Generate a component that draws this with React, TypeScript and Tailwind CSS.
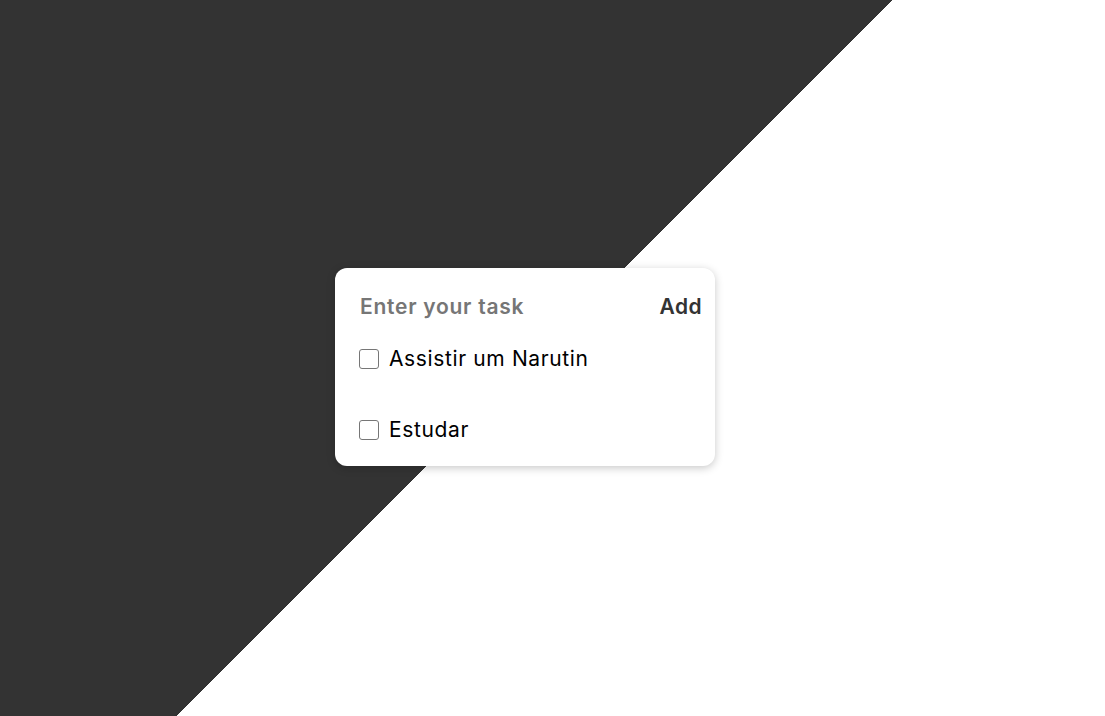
import { useState } from "react";

const TASKS = ["Assistir um Narutin", "Estudar"];

export default function App() {
  const [value, setValue] = useState("");

  return (
    <div className="flex min-h-screen items-center justify-center bg-[linear-gradient(135deg,#333333_49%,#ffffff_49%)] font-['Inter',sans-serif]">
      <div className="mr-[55px] mt-[18px] w-[380px] rounded-[12px] bg-white pb-[16px] pt-[19px] shadow-[0_2px_8px_rgba(0,0,0,0.22)]">
        {/* header */}
        <div className="flex h-[40px] items-center pl-[25px] pr-[13px]">
          <input
            value={value}
            onChange={(e) => setValue(e.target.value)}
            placeholder="Enter your task"
            className="min-w-0 flex-1 bg-transparent text-[21px] font-semibold tracking-[0.035em] text-[#333] outline-none placeholder:text-[#767676]"
          />
          <button className="text-[21px] font-semibold tracking-[0.02em] text-[#333]">Add</button>
        </div>

        <ul className="mt-[12px] flex flex-col gap-[31px] px-[24px]">
          {TASKS.map((t) => (
            <li key={t} className="flex h-[40px] items-center gap-[10px]">
              <input
                type="checkbox"
                className="h-[20px] w-[20px] appearance-none rounded-[3px] border border-[#767676] bg-white"
              />
              <span className="text-[21px] tracking-[0.03em] text-black">{t}</span>
            </li>
          ))}
        </ul>
      </div>
    </div>
  );
}
